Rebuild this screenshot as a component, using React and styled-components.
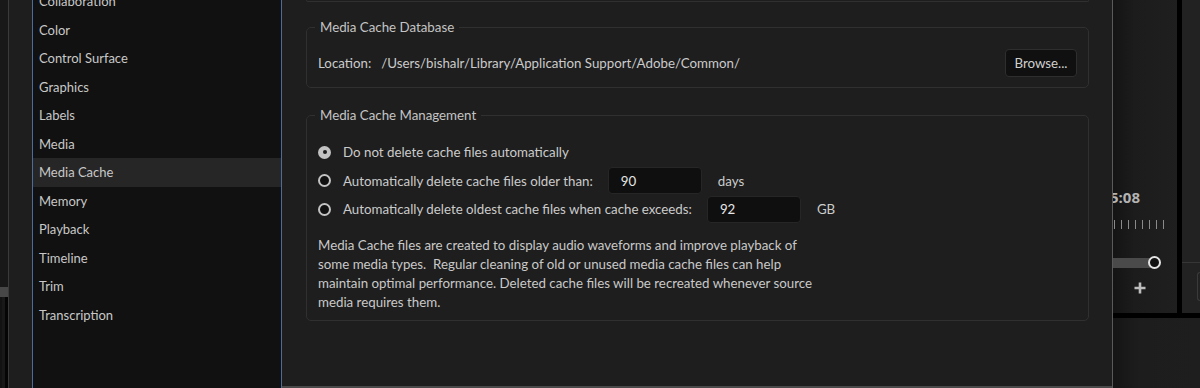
import styled, { createGlobalStyle } from "styled-components";

const GlobalStyle = createGlobalStyle`
    html, body {
        margin: 0;
        padding: 0;
        background: #1e1e1e;
    }
    body {
        font-family: Lato, "Liberation Sans", sans-serif;
        -webkit-font-smoothing: antialiased;
    }
`;

const categories = [
    "Collaboration",
    "Color",
    "Control Surface",
    "Graphics",
    "Labels",
    "Media",
    "Media Cache",
    "Memory",
    "Playback",
    "Timeline",
    "Trim",
    "Transcription",
];

const radios = [
    { label: "Do not delete cache files automatically", checked: true },
    { label: "Automatically delete cache files older than:", value: "90", unit: "days" },
    { label: "Automatically delete oldest cache files when cache exceeds:", value: "92", unit: "GB" },
];

const App = () => {
    return (
        <Frame>
            <GlobalStyle />
            <LeftStrip>
                <StripTop />
                <StripBlock />
                <StripBottom />
            </LeftStrip>

            <Dialog>
                <Sidebar>
                    <CategoryList>
                        {categories.map((name) => (
                            <Category key={name} selected={name === "Media Cache"}>
                                {name}
                            </Category>
                        ))}
                    </CategoryList>
                </Sidebar>

                <Content>
                    <PrevGroupTail />

                    <Group>
                        <Legend>Media Cache Database</Legend>
                        <LocationRow>
                            <Label>Location:</Label>
                            <Path>/Users/bishalr/Library/Application Support/Adobe/Common/</Path>
                            <Button>Browse...</Button>
                        </LocationRow>
                    </Group>

                    <Group $gap={18}>
                        <Legend>Media Cache Management</Legend>
                        <RadioList>
                            {radios.map((r) => (
                                <RadioRow key={r.label}>
                                    <Radio checked={r.checked} />
                                    <Label>{r.label}</Label>
                                    {r.value && (
                                        <>
                                            <NumberField>{r.value}</NumberField>
                                            <Unit>{r.unit}</Unit>
                                        </>
                                    )}
                                </RadioRow>
                            ))}
                        </RadioList>
                        <Description>
                            Media Cache files are created to display audio waveforms and improve playback of
                            <br />
                            some media types.&nbsp; Regular cleaning of old or unused media cache files can help
                            <br />
                            maintain optimal performance. Deleted cache files will be recreated whenever source
                            <br />
                            media requires them.
                        </Description>
                    </Group>
                </Content>
            </Dialog>

            <RightArea>
                <TopRow>
                    <MonitorCol>
                        <Timecode>5:08</Timecode>
                        <Ticks>
                            {Array.from({ length: 8 }).map((_, i) => (
                                <Tick key={i} />
                            ))}
                        </Ticks>
                        <SliderRow>
                            <Track />
                            <Knob />
                        </SliderRow>
                        <PlusButton>
                            <svg width="12" height="12" viewBox="0 0 12 12">
                                <path d="M6 0.5v11M0.5 6h11" stroke="#bdbdbd" strokeWidth="2.6" />
                            </svg>
                        </PlusButton>
                    </MonitorCol>
                    <BlackRule />
                    <SideCol>
                        <SideTop />
                        <SideBox />
                    </SideCol>
                </TopRow>
                <BlackBar />
                <BottomPanel />
            </RightArea>
        </Frame>
    );
};

const Frame = styled.div`
    display: flex;
    width: 1200px;
    height: 388px;
    overflow: hidden;
    background: #1e1e1e;
`;

const LeftStrip = styled.div`
    width: 8px;
    display: flex;
    flex-direction: column;
    background: #181818;
    border-right: 1px solid #3a3a3a;
`;

const StripTop = styled.div`
    height: 287px;
`;

const StripBlock = styled.div`
    height: 10px;
    background: #474747;
`;

const StripBottom = styled.div`
    flex: 1;
    border-left: 2px solid #121212;
    border-right: 3px solid #050505;
`;

const Dialog = styled.div`
    width: 1080px;
    padding-left: 23px;
    display: flex;
    background: #1e1e1e;
    border-right: 1px solid #5a5a5a;
`;

const Sidebar = styled.div`
    width: 248px;
    background: #111111;
    border-left: 1px solid #4c6c9c;
    border-right: 1px solid #4c6c9c;
    overflow: hidden;
`;

const CategoryList = styled.ul`
    list-style: none;
    margin: -13px 0 0;
    padding: 0;
`;

const Category = styled.li`
    height: 28.5px;
    line-height: 28.5px;
    padding-left: 6px;
    font-size: 13px;
    color: #c8c8c8;
    background: ${(p) => (p.selected ? "#262626" : "transparent")};
`;

const Content = styled.div`
    flex: 1;
    display: flex;
    flex-direction: column;
    padding: 0 23px 0 24px;
    border-bottom: 2px solid #4a4a4a;
`;

const PrevGroupTail = styled.div`
    height: 1px;
    border: 1px solid #303030;
    border-top: none;
    border-radius: 0 0 4px 4px;
`;

const Group = styled.fieldset`
    margin: ${(p) => p.$gap || 16}px 0 0;
    padding: 0;
    min-width: 0;
    border: 1px solid #303030;
    border-radius: 5px;
`;

const Legend = styled.legend`
    margin-left: 8px;
    padding: 0 5px;
    font-size: 13.3px;
    line-height: 18px;
    color: #c4c4c4;
`;

const LocationRow = styled.div`
    display: flex;
    align-items: center;
    padding: 13px 11px 10px 11px;
`;

const Label = styled.span`
    font-size: 13.3px;
    color: #cbcbcb;
    white-space: nowrap;
`;

const Path = styled.span`
    flex: 1;
    margin-left: 10px;
    font-size: 13.3px;
    color: #cbcbcb;
`;

const Button = styled.button`
    width: 72px;
    height: 28px;
    padding: 0;
    font-family: inherit;
    font-size: 13.3px;
    color: #cfcfcf;
    background: #101010;
    border: 1px solid #2e2e2e;
    border-radius: 4px;
`;

const RadioList = styled.div`
    display: flex;
    flex-direction: column;
    padding: 14px 11px 0;
`;

const RadioRow = styled.div`
    height: 28.5px;
    display: flex;
    align-items: center;
`;

const Radio = styled.span`
    box-sizing: border-box;
    width: 13px;
    height: 13px;
    margin-right: 12px;
    border-radius: 50%;
    display: flex;
    align-items: center;
    justify-content: center;
    flex-shrink: 0;
    background: ${(p) => (p.checked ? "#c2c2c2" : "#101010")};
    border: ${(p) => (p.checked ? "none" : "2.5px solid #c2c2c2")};

    &::after {
        content: "";
        width: 4px;
        height: 4px;
        border-radius: 50%;
        background: #1a1a1a;
        display: ${(p) => (p.checked ? "block" : "none")};
    }
`;

const NumberField = styled.div`
    box-sizing: border-box;
    width: 94px;
    height: 27px;
    margin-left: 15px;
    padding-left: 12px;
    display: flex;
    align-items: center;
    font-size: 13.3px;
    color: #e6e6e6;
    background: #0f0f0f;
    border: 1px solid #262626;
    border-radius: 4px;
`;

const Unit = styled.span`
    margin-left: 16px;
    font-size: 13.3px;
    color: #cbcbcb;
`;

const Description = styled.p`
    margin: 12px 0 0;
    padding: 0 11px 8px;
    font-size: 13.3px;
    line-height: 19px;
    color: #c9c9c9;
`;

const RightArea = styled.div`
    flex: 1;
    display: flex;
    flex-direction: column;
`;

const TopRow = styled.div`
    height: 313px;
    display: flex;
`;

const MonitorCol = styled.div`
    width: 64px;
    display: flex;
    flex-direction: column;
    padding-top: 188px;
    box-sizing: border-box;
    overflow: hidden;
    background: linear-gradient(90deg, #141414 0%, #1c1c1c 35%, #1f1f1f 100%);
`;

const Timecode = styled.div`
    margin-left: -3px;
    font-family: "Open Sans", sans-serif;
    font-weight: 700;
    font-size: 15px;
    line-height: 18px;
    color: #b3b3b3;
`;

const Ticks = styled.div`
    display: flex;
    gap: 6px;
    margin-top: 14px;
    padding-left: 1px;
`;

const Tick = styled.span`
    width: 1px;
    height: 9px;
    background: #8a8a8a;
`;

const SliderRow = styled.div`
    display: flex;
    align-items: center;
    margin-top: 27px;
`;

const Track = styled.div`
    width: 38px;
    height: 10px;
    background: #4a4a4a;
`;

const Knob = styled.div`
    box-sizing: border-box;
    width: 13px;
    height: 13px;
    margin-left: -3px;
    border-radius: 50%;
    border: 2.5px solid #e4e4e4;
    background: #111111;
`;

const PlusButton = styled.div`
    display: flex;
    margin: 13px 0 0 21px;
`;

const BlackRule = styled.div`
    width: 5px;
    background: #000000;
`;

const SideCol = styled.div`
    flex: 1;
    display: flex;
    flex-direction: column;
    background: #222222;
`;

const SideTop = styled.div`
    height: 262px;
    border-bottom: 1px solid #363636;
`;

const SideBox = styled.div`
    flex: 1;
    margin: 9px 0 12px 15px;
    border: 1px solid #3a3a3a;
    border-right: none;
    border-radius: 3px 0 0 3px;
`;

const BlackBar = styled.div`
    height: 5px;
    background: #000000;
`;

const BottomPanel = styled.div`
    flex: 1;
    background: linear-gradient(90deg, #151515 0%, #1d1d1d 30%, #1e1e1e 100%);
`;

export default App;
